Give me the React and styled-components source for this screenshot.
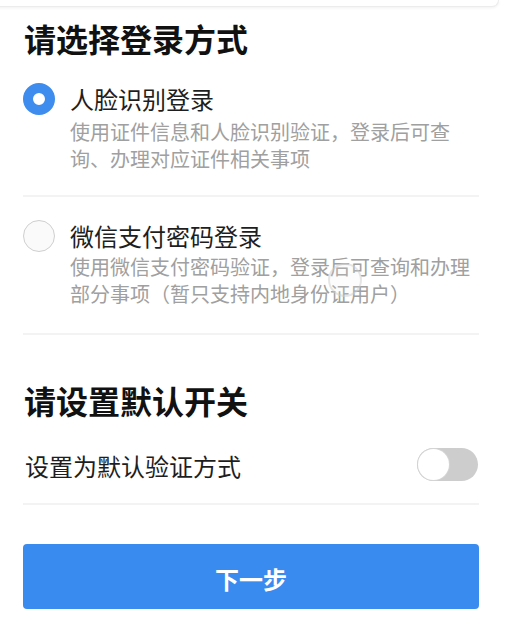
import React, { useState } from "react";
import styled, { createGlobalStyle } from "styled-components";

const GlobalStyle = createGlobalStyle`
  html, body { margin: 0; padding: 0; background: #fff; }
  body {
    font-family: "Noto Sans CJK SC", "Noto Sans", sans-serif;
    -webkit-font-smoothing: antialiased;
  }
`;

const Page = styled.div`
  position: relative;
  width: 505px;
  height: 628px;
  overflow: hidden;
  background: #fff;
`;

const TopCard = styled.div`
  height: 6px;
  margin: 0 6px 0 -10px;
  background: #fff;
  border: 1px solid #ececec;
  border-top: none;
  border-radius: 0 0 8px 8px;
  box-shadow: 0 1px 3px rgba(0, 0, 0, 0.06);
`;

const Content = styled.div`
  display: flex;
  flex-direction: column;
  padding: 0 26px 0 23px;
`;

const SectionTitle = styled.h2`
  margin: ${(p) => p.$top}px 0 0 1px;
  font-size: 32px;
  line-height: 40px;
  font-weight: 700;
  color: #111;
`;

const Option = styled.div`
  display: flex;
  align-items: flex-start;
  gap: 15px;
  padding: ${(p) => p.$pt}px 0 ${(p) => p.$pb}px;
  border-bottom: 2px solid #f3f3f3;
  cursor: pointer;
`;

const Radio = styled.span`
  flex: none;
  box-sizing: border-box;
  width: 32px;
  height: 32px;
  border-radius: 50%;
  background: ${(p) => (p.$checked ? "#fff" : "#fafafa")};
  border: ${(p) => (p.$checked ? "10px solid #3d8cee" : "1px solid #cfcfcf")};
`;

const OptionText = styled.div`
  display: flex;
  flex-direction: column;
  gap: ${(p) => p.$gap}px;
`;

const OptionTitle = styled.div`
  font-size: 24px;
  line-height: 32px;
  color: #1e1e1e;
`;

const OptionDesc = styled.div`
  font-size: 20px;
  line-height: 27px;
  color: #a0a0a0;
  width: 402px;
`;

const SwitchRow = styled.div`
  display: flex;
  align-items: center;
  justify-content: space-between;
  margin-top: 26px;
  padding: 0 0 21px 2px;
  border-bottom: 2px solid #f3f3f3;
`;

const SwitchLabel = styled.span`
  font-size: 24px;
  line-height: 32px;
  color: #1e1e1e;
  margin-top: 4px;
`;

const Switch = styled.button`
  position: relative;
  box-sizing: border-box;
  width: 61px;
  height: 33px;
  padding: 0;
  margin-right: 1px;
  border: none;
  border-radius: 17px;
  background: ${(p) => (p.$on ? "#3d8cee" : "#cdcdcd")};
  cursor: pointer;
`;

const Knob = styled.span`
  position: absolute;
  top: 1px;
  left: ${(p) => (p.$on ? "29px" : "1px")};
  box-sizing: border-box;
  width: 31px;
  height: 31px;
  border-radius: 50%;
  background: #fff;
  box-shadow: 0 0 0 1px #d4d4d4;
`;

const NextButton = styled.button`
  margin-top: 39px;
  height: 65px;
  width: 456px;
  padding: 3px 0 0;
  border: none;
  border-radius: 4px;
  background: #3a8bef;
  color: #fff;
  font-family: inherit;
  font-size: 24px;
  font-weight: 700;
  cursor: pointer;
`;

const TouchRing = styled.span`
  position: absolute;
  left: 328px;
  top: 263px;
  width: 34px;
  height: 34px;
  box-sizing: border-box;
  border-radius: 50%;
  border: 2px solid rgba(200, 200, 200, 0.45);
  background: rgba(235, 235, 235, 0.15);
  pointer-events: none;
`;

const options = [
  {
    id: "face",
    title: "人脸识别登录",
    desc: "使用证件信息和人脸识别验证，登录后可查询、办理对应证件相关事项",
    pt: 25,
    pb: 23,
    gap: 3,
  },
  {
    id: "wechat",
    title: "微信支付密码登录",
    desc: "使用微信支付密码验证，登录后可查询和办理部分事项（暂只支持内地身份证用户）",
    pt: 23,
    pb: 26,
    gap: 1,
  },
];

export default function App() {
  const [selected, setSelected] = useState("face");
  const [on, setOn] = useState(false);

  return (
    <Page>
      <GlobalStyle />
      <TopCard />
      <Content>
        <SectionTitle $top={11}>请选择登录方式</SectionTitle>
        {options.map((o) => (
          <Option
            key={o.id}
            $pt={o.pt}
            $pb={o.pb}
            onClick={() => setSelected(o.id)}
          >
            <Radio $checked={selected === o.id} />
            <OptionText $gap={o.gap}>
              <OptionTitle>{o.title}</OptionTitle>
              <OptionDesc>{o.desc}</OptionDesc>
            </OptionText>
          </Option>
        ))}
        <SectionTitle $top={45}>请设置默认开关</SectionTitle>
        <SwitchRow>
          <SwitchLabel>设置为默认验证方式</SwitchLabel>
          <Switch $on={on} onClick={() => setOn(!on)} aria-label="toggle">
            <Knob $on={on} />
          </Switch>
        </SwitchRow>
        <NextButton>下一步</NextButton>
      </Content>
      <TouchRing />
    </Page>
  );
}
